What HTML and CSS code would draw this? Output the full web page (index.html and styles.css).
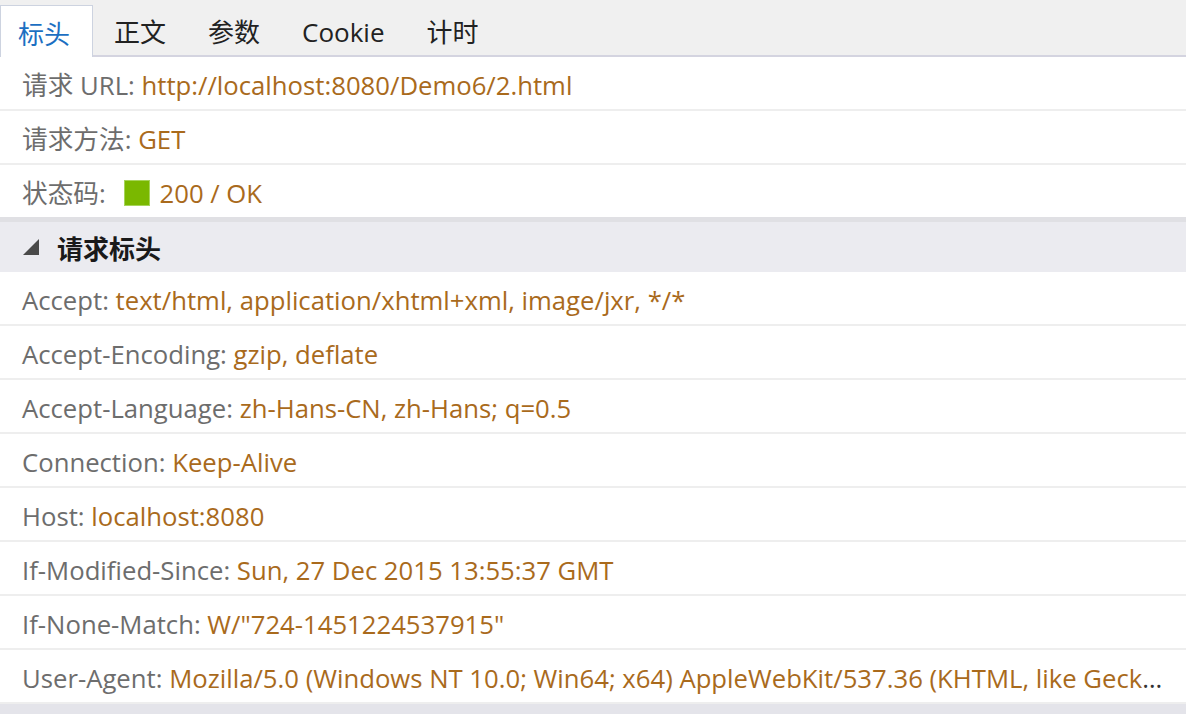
FILE: index.html
```html
<!DOCTYPE html>
<html lang="zh-CN">
<head>
    <meta charset="UTF-8">
    <title>标头</title>
    <link rel="stylesheet" href="styles.css">
</head>
<body>
    <div class="tabs">
        <div class="tab active">标头</div>
        <div class="tab">正文</div>
        <div class="tab">参数</div>
        <div class="tab">Cookie</div>
        <div class="tab">计时</div>
    </div>

    <div class="summary">
        <div class="row"><span class="key">请求 URL:</span> <span class="val">http://localhost:8080/Demo6/2.html</span></div>
        <div class="row"><span class="key">请求方法:</span> <span class="val">GET</span></div>
        <div class="row last"><span class="key">状态码:</span> <span class="status"></span><span class="val">200 / OK</span></div>
    </div>

    <div class="section-head">
        <span class="arrow"></span>
        <span>请求标头</span>
    </div>

    <div class="headers">
        <div class="row"><span class="key">Accept:</span> <span class="val">text/html, application/xhtml+xml, image/jxr, */*</span></div>
        <div class="row"><span class="key">Accept-Encoding:</span> <span class="val">gzip, deflate</span></div>
        <div class="row"><span class="key">Accept-Language:</span> <span class="val">zh-Hans-CN, zh-Hans; q=0.5</span></div>
        <div class="row"><span class="key">Connection:</span> <span class="val">Keep-Alive</span></div>
        <div class="row"><span class="key">Host:</span> <span class="val">localhost:8080</span></div>
        <div class="row"><span class="key">If-Modified-Since:</span> <span class="val">Sun, 27 Dec 2015 13:55:37 GMT</span></div>
        <div class="row"><span class="key">If-None-Match:</span> <span class="val">W/"724-1451224537915"</span></div>
        <div class="row"><span class="key">User-Agent:</span> <span class="val">Mozilla/5.0 (Windows NT 10.0; Win64; x64) AppleWebKit/537.36 (KHTML, like Gecko) Chrome/46.0.2486.0 Safari/537.36 Edge/13.10586</span></div>
    </div>
</body>
</html>
```

FILE: styles.css
```css
body {
    margin: 0;
    font-family: 'Open Sans', 'Noto Sans CJK SC', sans-serif;
    background-color: #e4e4ea;
    overflow: hidden;
}

.tabs {
    display: flex;
    height: 55px;
    background-color: #f0f0f0;
    border-bottom: 2px solid #d4d4e0;
    align-items: flex-end;
}

.tab {
    padding: 0 21px;
    height: 50px;
    line-height: 54px;
    font-size: 26px;
    color: #222;
    box-sizing: border-box;
}

.tab.active {
    padding: 0 22px 0 17px;
    height: 52px;
    line-height: 56px;
    margin-bottom: -2px;
    color: #1c6fc2;
    background-color: #fff;
    border: 1px solid #cdd3e0;
    border-bottom: none;
}

.summary, .headers {
    background-color: #fff;
}

.row {
    height: 54px;
    line-height: 50px;
    padding: 4px 14px 0 22px;
    box-sizing: border-box;
    border-bottom: 2px solid #eeeeee;
    font-size: 25.7px;
    color: #333;
    white-space: nowrap;
    overflow: hidden;
    text-overflow: ellipsis;
}

.summary .row.last {
    border-bottom: none;
    height: 52px;
}

.key {
    color: #6d6d6d;
}

.val {
    color: #a96a1c;
}

.status {
    display: inline-block;
    width: 24px;
    height: 24px;
    margin: 0 10px 0 11px;
    vertical-align: -3px;
    background-color: #7ab800;
    border: 1px solid #a6d45a;
}

.section-head {
    display: flex;
    align-items: center;
    gap: 18px;
    height: 55px;
    padding: 2px 0 0 23px;
    box-sizing: border-box;
    background-color: #ebebf0;
    border-top: 5px solid #e0e0e4;
    font-size: 26px;
    font-weight: bold;
    color: #1a1a1a;
}

.arrow {
    width: 0;
    height: 0;
    border-left: 16px solid transparent;
    border-bottom: 16px solid #4a4a4a;
    margin-top: -2px;
}
```
